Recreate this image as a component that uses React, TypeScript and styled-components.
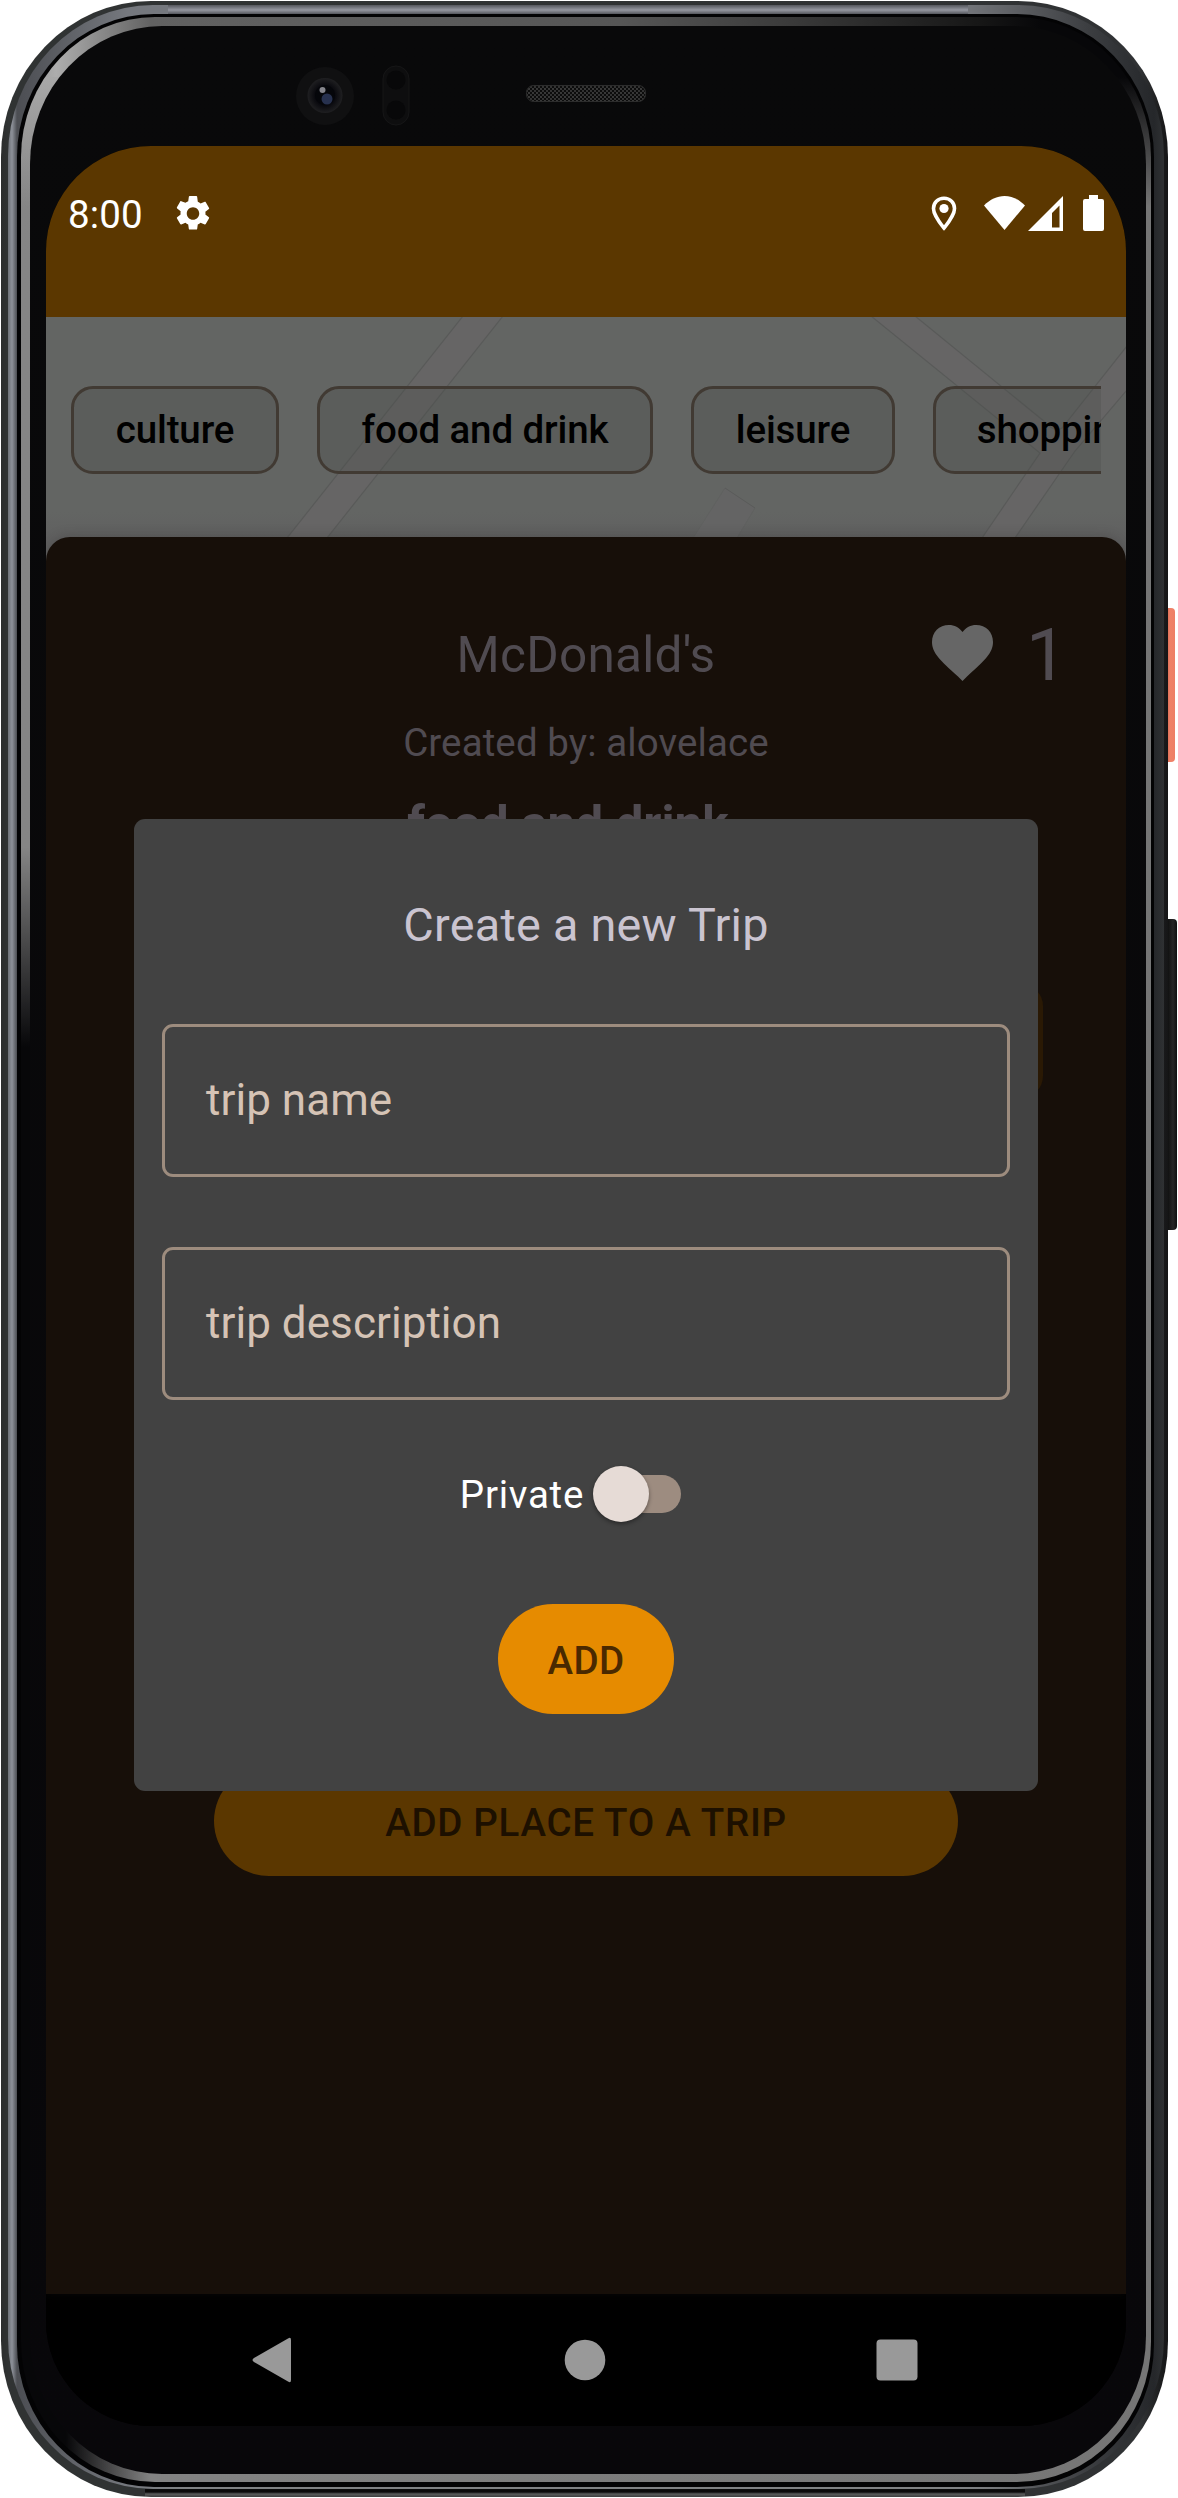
import React from "react";
import styled, { createGlobalStyle } from "styled-components";

const GlobalStyle = createGlobalStyle`
  *, *::before, *::after { box-sizing: border-box; }
  html, body { margin: 0; background: #fff; }
  body { font-family: Roboto, "Liberation Sans", sans-serif; }
`;

const Stage = styled.main`
  position: relative;
  width: 1178px;
  height: 2498px;
  padding: 1px 0 0 1px;
  overflow: hidden;
`;

const SideKey = styled.div<{ $top: number; $height: number; $width: number; $paint: string }>`
  position: absolute;
  left: 1164px;
  top: ${(p) => p.$top}px;
  width: ${(p) => p.$width}px;
  height: ${(p) => p.$height}px;
  border-radius: 0 4px 4px 0;
  background: ${(p) => p.$paint};
`;

const Shell = styled.div`
  position: relative;
  width: 1167px;
  height: 2496px;
  padding: 4px 4px 8px 7px;
  border-radius: 150px / 156px;
  background:
    linear-gradient(#0b0b0b 3px, #5a5c5c 5px, #3d3e3e) center bottom / 880px 8px no-repeat,
    linear-gradient(90deg, #2b2d2d 0, #303333 8px, #303234 1140px, #151516 1167px);
`;

const Chrome = styled.div`
  height: 100%;
  padding: 9px 10px 2px 9px;
  border-radius: 145px / 151px;
  background:
    linear-gradient(90deg, transparent, #7f8183 60px, #7f8183 830px, transparent) center bottom / 920px 2px no-repeat,
    linear-gradient(#55575d, #9597a0 5px, #55575d) 160px 0 / 800px 9px no-repeat,
    linear-gradient(90deg, #6d7178 0, #8d9199 4px, #4c4e53 9px, #75787e 120px, #77797e 950px, #3c3e41 1080px, #25272a 1146px, #2f3133 1156px);
`;

const Gap = styled.div`
  height: 100%;
  padding: 3px 3px 5px 4px;
  border-radius: 137px / 143px;
  background: #030304;
`;

const Rim = styled.div`
  height: 100%;
  padding: 9px 5px 8px 9px;
  border-radius: 134px / 140px;
  background:
    linear-gradient(90deg, #909090 0, #adadad 35px, #626262 130px, #565656 600px, #3c3c3c 760px, #161616 960px, #070709 1020px) 0 0 / 100% 60px no-repeat,
    linear-gradient(180deg, #070709 60px, rgba(7, 7, 9, 0) 190px) 100% 0 / 130px 190px no-repeat,
    linear-gradient(180deg, #a8a8a8 60px, rgba(168, 168, 168, 0) 190px) 0 0 / 50px 190px no-repeat,
    linear-gradient(180deg, rgba(7, 7, 9, 0), #070709) 0 830px / 20px 200px no-repeat,
    linear-gradient(#070709, #070709) 0 1030px / 20px 1306px no-repeat,
    linear-gradient(90deg, #070709 45px, rgba(7, 7, 9, 0) 130px) 0 100% / 130px 130px no-repeat,
    linear-gradient(90deg, #858585 0, #7c7c7c 50%, #757575 100%);
`;

const Bezel = styled.div`
  position: relative;
  height: 100%;
  padding: 120px 0 0 16px;
  border-radius: 132px / 138px;
  background: linear-gradient(#09090a, #08070a);
`;

const HardwareArt = styled.svg`
  position: absolute;
  left: 261px;
  top: 30px;
  width: 370px;
  height: 80px;
`;

const Screen = styled.div`
  position: relative;
  width: 1080px;
  height: 2280px;
  display: flex;
  flex-direction: column;
  overflow: hidden;
  border-radius: 105px;
  background: #000;
`;

const StatusBar = styled.header`
  flex: none;
  height: 171px;
  display: flex;
  align-items: flex-start;
  padding: 43px 22px 0 22px;
  background: #5b3700;
`;

const Clock = styled.span`
  height: 52px;
  line-height: 52px;
  font-size: 38.5px;
  color: #fff;
  letter-spacing: 0.1px;
`;

const StatusIcon = styled.svg<{ $w: number; $h?: number; $ml: number | string; $mt?: number }>`
  flex: none;
  width: ${(p) => p.$w}px;
  height: ${(p) => p.$h ?? 35}px;
  margin-left: ${(p) => (typeof p.$ml === "number" ? `${p.$ml}px` : p.$ml)};
  margin-top: ${(p) => p.$mt ?? 7}px;
`;

const MapArea = styled.section`
  position: relative;
  flex: none;
  height: 244px;
  padding: 69px 25px 0;
  margin-bottom: -24px;
  background: linear-gradient(#636563 0, #636563 195px, #606060 222px);
`;

const Roads = styled.svg`
  position: absolute;
  inset: 0;
  width: 1080px;
  height: 220px;
`;

const ChipRow = styled.div`
  position: relative;
  display: flex;
  gap: 38px;
  overflow: hidden;
`;

const Chip = styled.span<{ $w: number }>`
  flex: none;
  width: ${(p) => p.$w}px;
  height: 88px;
  display: flex;
  align-items: center;
  justify-content: center;
  padding-bottom: 1px;
  border: 3px solid #413a33;
  border-radius: 22px;
  background: rgba(72, 76, 72, 0.3);
  color: #000;
  font-size: 38.5px;
  font-weight: 500;
  letter-spacing: -0.12px;
`;

const Sheet = styled.section`
  position: relative;
  flex: 1;
  display: flex;
  flex-direction: column;
  align-items: center;
  padding-top: 84px;
  border-radius: 24px 24px 0 0;
  background: #170f09;
  color: #504b51;
  box-shadow: 0 -1px 12px rgba(40, 36, 36, 0.25);
`;

const PlaceHeader = styled.div`
  width: 100%;
  height: 68px;
  display: grid;
  grid-template-columns: 1fr auto 1fr;
  align-items: center;
`;

const PlaceName = styled.h1`
  grid-column: 2;
  margin: 0;
  font-size: 49.5px;
  font-weight: 400;
  line-height: 60px;
  letter-spacing: 0.25px;
`;

const Likes = styled.div`
  display: flex;
  align-items: center;
  justify-content: flex-end;
  padding-right: 59px;
  gap: 33px;
  font-size: 73px;
  line-height: 68px;
`;

const Heart = styled.svg`
  width: 61px;
  height: 56px;
  margin-top: -4px;
`;

const Creator = styled.p`
  margin: 30px 0 0;
  font-size: 38.5px;
  line-height: 48px;
  letter-spacing: 0.1px;
`;

const Category = styled.h2`
  margin: 27px 36px 0 0;
  font-size: 49.5px;
  font-weight: 700;
  line-height: 60px;
`;

const MutedAction = styled.div`
  flex: none;
  width: 899px;
  height: 114px;
  margin: 130px 0 0 15px;
  border-radius: 22px;
  background: #2a1904;
`;

const FilledButton = styled.button<{ $w: number; $dim?: boolean; $mt: number; $spacing: number }>`
  flex: none;
  width: ${(p) => p.$w}px;
  height: 110px;
  margin-top: ${(p) => p.$mt}px;
  padding: 4px 0 0;
  border: 0;
  border-radius: 55px;
  background: ${(p) => (p.$dim ? "#5b3700" : "#e68b00")};
  color: ${(p) => (p.$dim ? "#1d1000" : "#4a2900")};
  font: 500 38.5px/46px Roboto, sans-serif;
  letter-spacing: ${(p) => p.$spacing}px;
`;

const Dialog = styled.div`
  position: absolute;
  left: 88px;
  top: 673px;
  width: 904px;
  height: 972px;
  display: flex;
  flex-direction: column;
  align-items: center;
  padding: 77px 28px 0;
  border-radius: 11px;
  background: #424242;
`;

const DialogTitle = styled.h2`
  margin: 0 0 70px;
  font-size: 46.75px;
  font-weight: 400;
  line-height: 58px;
  letter-spacing: 0.27px;
  color: #cac4d0;
`;

const Field = styled.label`
  width: 848px;
  height: 153px;
  display: flex;
  align-items: center;
  margin-bottom: 70px;
  padding: 0 0 2px 41px;
  border: 3px solid #9d8c7e;
  border-radius: 11px;
  font-size: 44px;
  letter-spacing: 0.05px;
  color: #d5c3b5;
`;

const PrivacyRow = styled.div`
  height: 56px;
  display: flex;
  align-items: center;
  gap: 9px;
  margin: -4px 31px 0 0;
  font-size: 38.5px;
  letter-spacing: 0.75px;
  color: #fff;
`;

const Track = styled.span`
  width: 88px;
  height: 38px;
  display: flex;
  align-items: center;
  border-radius: 19px;
  background: linear-gradient(90deg, transparent 20px, #9d8c80 20px);
`;

const Thumb = styled.span`
  width: 56px;
  height: 56px;
  flex: none;
  border-radius: 50%;
  background: #e6dbd6;
  box-shadow: 0 2px 4px rgba(0, 0, 0, 0.4);
`;

const NavBar = styled.nav`
  flex: none;
  height: 132px;
  display: flex;
  align-items: center;
  justify-content: space-between;
  padding: 0 208px 0 206px;
  background: #000;
`;

const NavIcon = styled.svg`
  width: 42px;
  height: 46px;
  fill: #999;
`;

function Hardware() {
  return (
    <HardwareArt viewBox="291 56 370 80">
      <defs>
        <pattern id="mesh" width="4" height="4" patternUnits="userSpaceOnUse">
          <rect width="4" height="4" fill="#0c0c0c" />
          <circle cx="1" cy="1" r="0.9" fill="#4c4c4c" />
          <circle cx="3" cy="3" r="0.9" fill="#444" />
        </pattern>
        <radialGradient id="lens">
          <stop offset="0" stopColor="#151a2c" />
          <stop offset="0.55" stopColor="#08080d" />
          <stop offset="1" stopColor="#1f1f21" />
        </radialGradient>
      </defs>
      <circle cx="325" cy="96" r="29" fill="#101011" />
      <circle cx="325" cy="95.500" r="17.500" fill="url(#lens)" />
      <circle cx="325" cy="95" r="10" fill="#05060a" />
      <circle cx="327" cy="99" r="5.500" fill="#27314f" />
      <circle cx="322.500" cy="90" r="3" fill="#85858c" />
      <rect x="383" y="66" width="26" height="59" rx="13" fill="#0e0e0f" stroke="#161617" />
      <circle cx="396" cy="80" r="9.500" fill="#080809" />
      <circle cx="396" cy="110" r="9.500" fill="#080809" />
      <rect x="526.500" y="85.500" width="119" height="16" rx="7" fill="url(#mesh)" stroke="#2c2c2c" />
    </HardwareArt>
  );
}

function StatusIcons() {
  return (
    <>
      <StatusIcon viewBox="2.2 2 19.6 20" $w={34} $ml={33} preserveAspectRatio="none" fill="#fff">
        <path
          fillRule="evenodd"
          d="M19.140 12.940c.04-.3.060-.61.060-.94 0-.32-.02-.64-.07-.94l2.030-1.580c.18-.14.230-.41.120-.61l-1.920-3.320c-.12-.22-.37-.29-.59-.22l-2.390.960c-.5-.38-1.030-.7-1.620-.94L14.400 2.410c-.04-.24-.24-.41-.48-.41h-3.840c-.24 0-.43.170-.47.410l-.36 2.540c-.59.240-1.130.570-1.620.940l-2.390-.96c-.22-.08-.47 0-.59.220L2.740 8.470c-.12.210-.08.470.120.610l2.030 1.580c-.05.300-.09.630-.09.940s.02.640.070.940l-2.030 1.580c-.18.140-.23.410-.12.610l1.920 3.320c.12.220.370.290.590.220l2.390-.96c.500.380 1.030.700 1.620.940l.36 2.540c.05.240.240.410.480.410h3.840c.24 0 .44-.17.470-.41l.36-2.540c.59-.24 1.130-.56 1.620-.94l2.390.960c.22.080.470 0 .59-.22l1.920-3.320c.12-.22.070-.47-.12-.61l-2.010-1.580zM12 15.600c-1.980 0-3.600-1.620-3.600-3.600s1.620-3.600 3.600-3.600 3.600 1.620 3.600 3.600-1.620 3.600-3.600 3.600z"
        />
      </StatusIcon>
      <StatusIcon viewBox="0 0 26 35" $w={26} $ml="auto" fill="none">
        <path d="M13 2.200c-6.200 0-10.500 4.600-10.500 10.300C2.500 19.500 13 32 13 32s10.500-12.500 10.500-19.500C23.500 6.800 19.200 2.200 13 2.200z" stroke="#fff" strokeWidth="3.600" />
        <circle cx="13" cy="12.500" r="4.600" fill="#fff" />
      </StatusIcon>
      <StatusIcon viewBox="0 0 41 34" $w={41} $h={34} $ml={27} fill="#fff">
        <path d="M0 9.500C6 3.500 13 0 20.500 0S35 3.500 41 9.500L20.500 34z" />
      </StatusIcon>
      <StatusIcon viewBox="0 0 35 35" $w={35} $ml={3} fill="#fff">
        <path fillRule="evenodd" d="M35 0v35H0zM31.500 9.500L24 17v14.500H31.500z" />
      </StatusIcon>
      <StatusIcon viewBox="0 0 21 36" $w={21} $h={36} $ml={20} $mt={6} fill="#fff">
        <path d="M6 0h9v4h4a2 2 0 0 1 2 2v28a2 2 0 0 1-2 2H2a2 2 0 0 1-2-2V6a2 2 0 0 1 2-2h4z" />
      </StatusIcon>
    </>
  );
}

function MapRoads() {
  return (
    <Roads viewBox="46 317 1080 220" fill="#666565" stroke="#595a59" strokeWidth="1.200">
      <path d="M463 316L287 538H327L503 316z" />
      <path d="M871 316L1040 453L982 538H1015L1075 451L1127 390V346L1062 428Q1055 433 1045 422L915 316z" />
      <path d="M725 488L755 508L737 538H693z" stroke="none" fill="#646464" />
      <path d="M725 488L755 508" strokeWidth="0.900" />
      <path d="M755 508L737 538M725 488L693 538" stroke="#5f605f" strokeWidth="0.700" />
    </Roads>
  );
}

const chips = [
  { label: "culture", width: 208 },
  { label: "food and drink", width: 336 },
  { label: "leisure", width: 204 },
  { label: "shopping", width: 246 },
];

export default function App() {
  return (
    <>
      <GlobalStyle />
      <Stage>
        <SideKey $top={608} $height={154} $width={11} $paint="linear-gradient(90deg, #d9684f 3px, #ef8268 6px, #ee7f66)" />
        <SideKey $top={919} $height={311} $width={13} $paint="linear-gradient(90deg, #111 4px, #262626 9px, #101010)" />
        <Shell>
          <Chrome>
            <Gap>
              <Rim>
                <Bezel>
                  <Hardware />
                  <Screen>
                    <StatusBar>
                      <Clock>8:00</Clock>
                      <StatusIcons />
                    </StatusBar>
                    <MapArea>
                      <MapRoads />
                      <ChipRow>
                        {chips.map((c) => (
                          <Chip key={c.label} $w={c.width}>{c.label}</Chip>
                        ))}
                      </ChipRow>
                    </MapArea>
                    <Sheet>
                      <PlaceHeader>
                        <PlaceName>McDonald's</PlaceName>
                        <Likes>
                          <Heart viewBox="0 0 61 56" fill="#666">
                            <path d="M30.500 56L26 51.500C8 35 0 28 0 17C0 7 7 0 17 0C22.500 0 27 2.500 30.500 7C34 2.500 38.500 0 44 0C54 0 61 7 61 17C61 28 53 35 35 51.500z" />
                          </Heart>
                          <span>1</span>
                        </Likes>
                      </PlaceHeader>
                      <Creator>Created by: alovelace</Creator>
                      <Category>food and drink</Category>
                      <MutedAction />
                      <FilledButton $w={744} $mt={668} $spacing={0.7} $dim>ADD PLACE TO A TRIP</FilledButton>
                    </Sheet>
                    <NavBar>
                      <NavIcon viewBox="0 0 42 46">
                        <path d="M36 1.500Q39 -0.500 39 3V43Q39 46.500 36 44.500L2 25Q-1 23 2 21z" />
                      </NavIcon>
                      <NavIcon viewBox="0 0 42 46">
                        <circle cx="21" cy="23" r="20.300" />
                      </NavIcon>
                      <NavIcon viewBox="0 0 42 46">
                        <rect x="0.500" y="2.500" width="41" height="41" rx="4" />
                      </NavIcon>
                    </NavBar>
                    <Dialog role="dialog">
                      <DialogTitle>Create a new Trip</DialogTitle>
                      <Field>trip name</Field>
                      <Field>trip description</Field>
                      <PrivacyRow>
                        Private
                        <Track><Thumb /></Track>
                      </PrivacyRow>
                      <FilledButton $w={176} $mt={82} $spacing={0.4}>ADD</FilledButton>
                    </Dialog>
                  </Screen>
                </Bezel>
              </Rim>
            </Gap>
          </Chrome>
        </Shell>
      </Stage>
    </>
  );
}
